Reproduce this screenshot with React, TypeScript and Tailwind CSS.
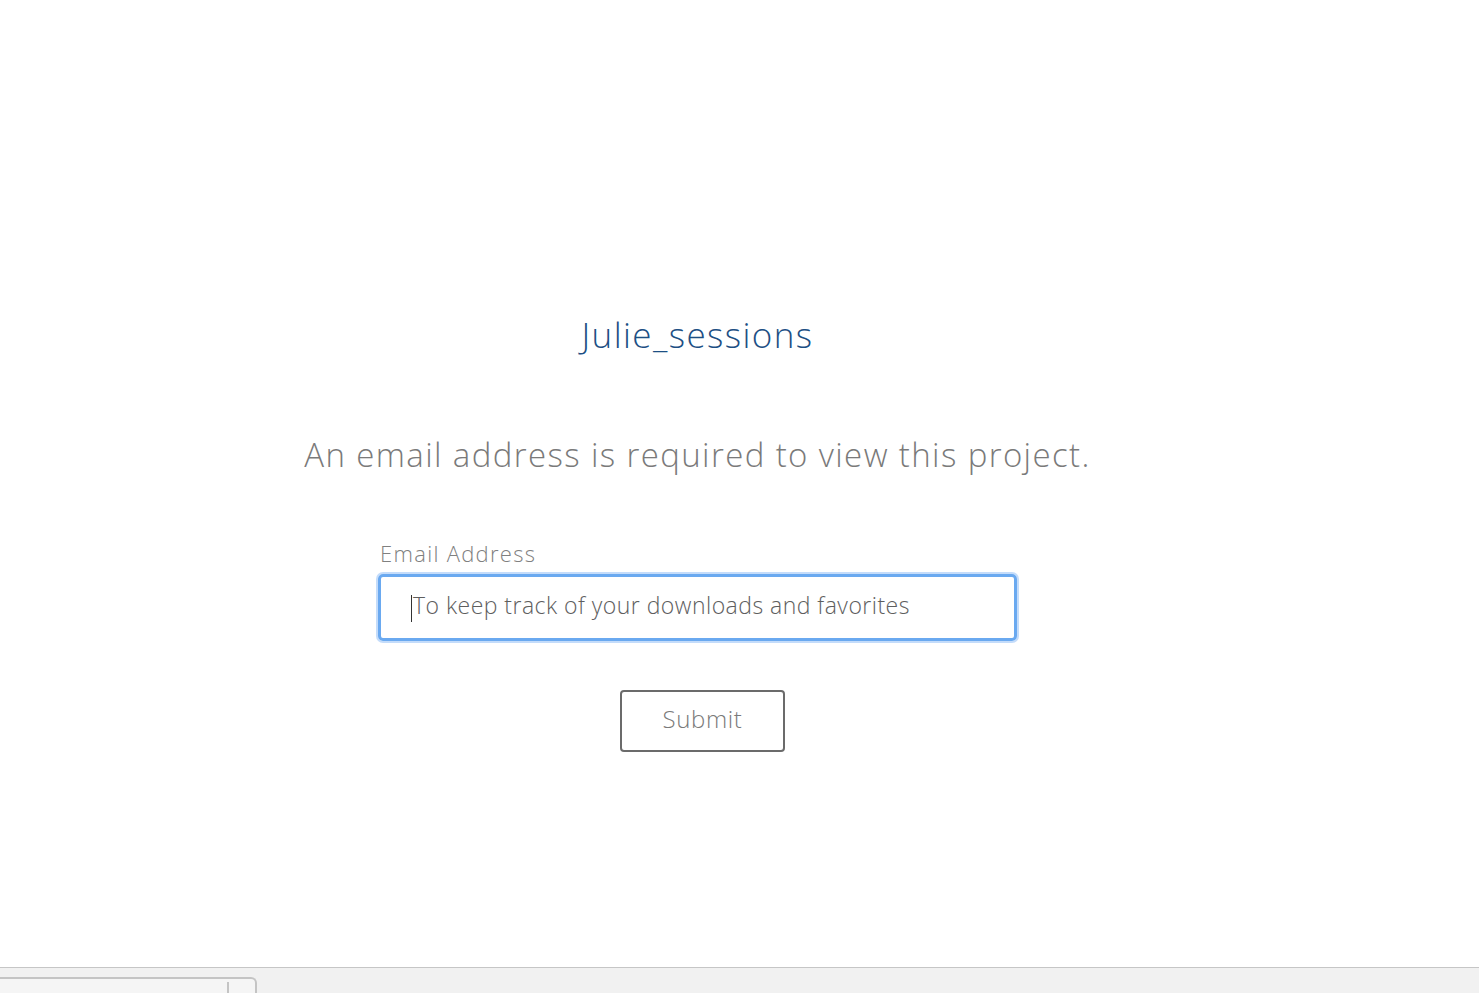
export default function App() {
  return (
    <div className="w-[1479px] h-[993px] bg-white flex flex-col overflow-hidden" style={{ fontFamily: '"Open Sans", "Liberation Sans", sans-serif' }}>
      <div className="flex-1 w-[1395px] flex flex-col items-center">
        <div className="h-[310px]" />
        <h1 className="text-[35px] leading-[50px] font-light text-[#1d4f84] tracking-[1.4px]">Julie_sessions</h1>
        <div className="h-[71px]" />
        <p className="text-[33px] leading-[48px] font-light text-[#7a7a7a] tracking-[1.38px]">An email address is required to view this project.</p>
        <div className="h-[59px]" />
        <div className="w-[639px] flex flex-col">
          <label className="text-[22px] leading-[30px] font-light text-[#808080] pl-[2px] tracking-[1.3px]">Email Address</label>
          <div className="mt-[6px] h-[67px] rounded-[5px] border-[3px] border-[#6aa9f0] ring-[2px] ring-[#c4dcfa] flex items-center pl-[30px]">
            <span className="w-[1px] h-[27px] bg-[#333] mt-[2px]" />
            <span className="text-[23px] leading-[30px] font-light text-[#5e5e5e] ml-[1px] tracking-[0.47px] -mt-[6px]">To keep track of your downloads and favorites</span>
          </div>
        </div>
        <button className="mt-[49px] ml-[10px] w-[165px] h-[62px] rounded-[4px] border-[2px] border-[#6b6b6b] text-[24px] leading-[30px] font-light text-[#7a7a7a] tracking-[0.6px] pb-[4px]">Submit</button>
      </div>
      <div className="h-[26px] border-t border-[#c6c6c6] bg-[#f1f1f1] flex items-end">
        <div className="w-[257px] h-[16px] border-t-[2px] border-r-[2px] border-[#c4c4c4] rounded-tr-[6px] bg-[#f5f5f5] flex justify-end">
          <div className="w-[2px] h-[11px] bg-[#c4c4c4] mt-[3px] mr-[26px]" />
        </div>
      </div>
    </div>
  );
}
